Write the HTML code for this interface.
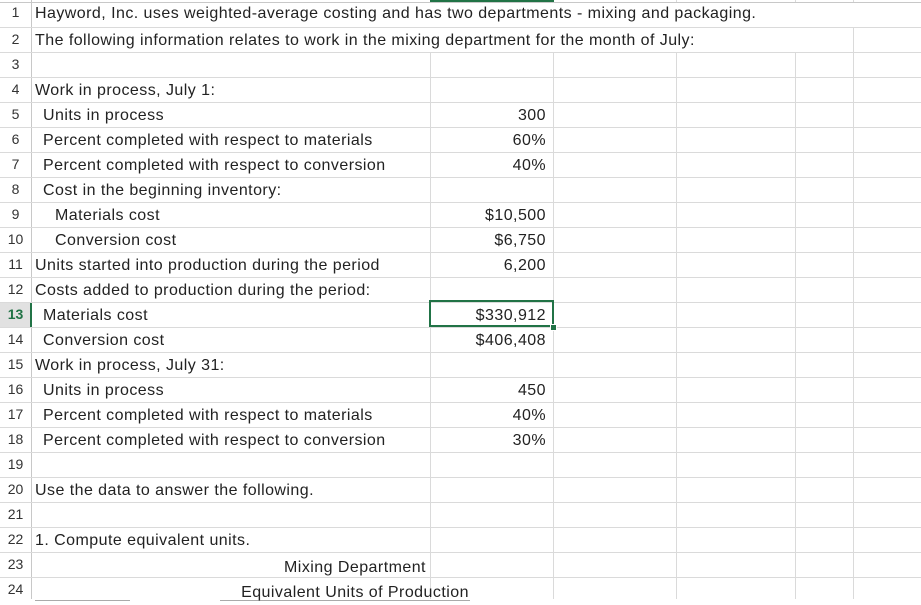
<!DOCTYPE html>
<html><head><meta charset="utf-8"><style>
body{margin:0;width:921px;height:602px;overflow:hidden;background:#fff;font-family:"Liberation Sans",sans-serif;position:relative}
.h{position:absolute;left:0;width:921px;height:1px;background:#dadada}
.v{position:absolute;top:0;height:602px;width:1px;background:#dadada}
.n{position:absolute;left:0;width:31px;text-align:center;font-size:14px;color:#333;line-height:25px}
.t{position:absolute;font-size:16px;color:#222;line-height:25px;white-space:nowrap;letter-spacing:0.45px}
.r{position:absolute;right:375px;font-size:16px;color:#222;line-height:25px;text-align:right;letter-spacing:0.45px}
</style></head><body>
<div class="v" style="left:31px;background:#c8c8c8"></div>
<div class="v" style="left:430px"></div>
<div class="v" style="left:553px"></div>
<div class="v" style="left:676px"></div>
<div class="v" style="left:795px"></div>
<div class="v" style="left:853px"></div>
<div style="position:absolute;left:430px;top:0;width:124px;height:2px;background:#217346"></div>
<div class="h" style="top:2px;background:#c8c8c8"></div>
<div class="h" style="top:27px"></div><div class="h" style="top:52px"></div><div class="h" style="top:77px"></div><div class="h" style="top:102px"></div><div class="h" style="top:127px"></div><div class="h" style="top:152px"></div><div class="h" style="top:177px"></div><div class="h" style="top:202px"></div><div class="h" style="top:227px"></div><div class="h" style="top:252px"></div><div class="h" style="top:277px"></div><div class="h" style="top:302px"></div><div class="h" style="top:327px"></div><div class="h" style="top:352px"></div><div class="h" style="top:377px"></div><div class="h" style="top:402px"></div><div class="h" style="top:427px"></div><div class="h" style="top:452px"></div><div class="h" style="top:477px"></div><div class="h" style="top:502px"></div><div class="h" style="top:527px"></div><div class="h" style="top:552px"></div><div class="h" style="top:577px"></div>
<div style="position:absolute;left:0;top:303px;width:31px;height:24px;background:#e1e1e1"></div>
<div style="position:absolute;left:30px;top:303px;width:2px;height:24px;background:#217346"></div>
<div style="position:absolute;left:32px;top:3px;width:889px;height:24px;background:#fff"></div>
<div style="position:absolute;left:32px;top:28px;width:821px;height:24px;background:#fff"></div>
<div style="position:absolute;left:0;top:599px;width:921px;height:3px;background:#fff"></div>
<div style="position:absolute;left:35px;top:600px;width:95px;height:1px;background:#aaa"></div>
<div style="position:absolute;left:220px;top:600px;width:250px;height:1px;background:#aaa"></div>

<div class="n" style="top:0">1</div><div class="n" style="top:27px">2</div><div class="n" style="top:52px">3</div><div class="n" style="top:77px">4</div><div class="n" style="top:102px">5</div><div class="n" style="top:127px">6</div><div class="n" style="top:152px">7</div><div class="n" style="top:177px">8</div><div class="n" style="top:202px">9</div><div class="n" style="top:227px">10</div><div class="n" style="top:252px">11</div><div class="n" style="top:277px">12</div><div class="n" style="top:302px;color:#217346;font-weight:bold">13</div><div class="n" style="top:327px">14</div><div class="n" style="top:352px">15</div><div class="n" style="top:377px">16</div><div class="n" style="top:402px">17</div><div class="n" style="top:427px">18</div><div class="n" style="top:452px">19</div><div class="n" style="top:477px">20</div><div class="n" style="top:502px">21</div><div class="n" style="top:527px">22</div><div class="n" style="top:552px">23</div><div class="n" style="top:577px">24</div>

<div class="t" style="left:35px;top:1px">Hayword, Inc. uses weighted-average costing and has two departments - mixing and packaging.</div>
<div class="t" style="left:35px;top:28px">The following information relates to work in the mixing department for the month of July:</div>
<div class="t" style="left:35px;top:78px">Work in process, July 1:</div>
<div class="t" style="left:43px;top:103px">Units in process</div>
<div class="t" style="left:43px;top:128px">Percent completed with respect to materials</div>
<div class="t" style="left:43px;top:153px">Percent completed with respect to conversion</div>
<div class="t" style="left:43px;top:178px">Cost in the beginning inventory:</div>
<div class="t" style="left:55px;top:203px">Materials cost</div>
<div class="t" style="left:55px;top:228px">Conversion cost</div>
<div class="t" style="left:35px;top:253px">Units started into production during the period</div>
<div class="t" style="left:35px;top:278px">Costs added to production during the period:</div>
<div class="t" style="left:43px;top:303px">Materials cost</div>
<div class="t" style="left:43px;top:328px">Conversion cost</div>
<div class="t" style="left:35px;top:353px">Work in process, July 31:</div>
<div class="t" style="left:43px;top:378px">Units in process</div>
<div class="t" style="left:43px;top:403px">Percent completed with respect to materials</div>
<div class="t" style="left:43px;top:428px">Percent completed with respect to conversion</div>
<div class="t" style="left:35px;top:478px">Use the data to answer the following.</div>
<div class="t" style="left:35px;top:528px">1. Compute equivalent units.</div>
<div class="t" style="left:205px;width:300px;text-align:center;top:555px">Mixing Department</div>
<div class="t" style="left:205px;width:300px;text-align:center;top:580px">Equivalent Units of Production</div>

<div class="r" style="top:103px">300</div>
<div class="r" style="top:128px">60%</div>
<div class="r" style="top:153px">40%</div>
<div class="r" style="top:203px">$10,500</div>
<div class="r" style="top:228px">$6,750</div>
<div class="r" style="top:253px">6,200</div>
<div class="r" style="top:303px">$330,912</div>
<div class="r" style="top:328px">$406,408</div>
<div class="r" style="top:378px">450</div>
<div class="r" style="top:403px">40%</div>
<div class="r" style="top:428px">30%</div>

<div style="position:absolute;left:429px;top:300px;width:121px;height:23px;border:2px solid #217346"></div>
<div style="position:absolute;left:550px;top:324px;width:5px;height:5px;background:#217346;border:1px solid #fff"></div>
</body></html>
